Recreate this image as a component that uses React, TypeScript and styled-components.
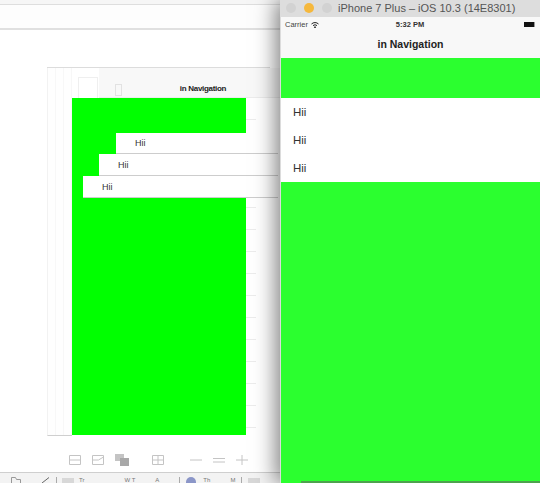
import React from "react";
import styled, { createGlobalStyle } from "styled-components";

const Global = createGlobalStyle`
  html, body { margin: 0; padding: 0; background: #fff; }
  #root { width: 540px; height: 483px; overflow: hidden; }
`;

const Page = styled.div`
  width: 540px;
  height: 483px;
  display: flex;
  overflow: hidden;
  font-family: "Liberation Sans", Arial, sans-serif;
  background: #fff;
`;

const Xcode = styled.div`
  width: 280px;
  flex: none;
  display: flex;
  flex-direction: column;
  position: relative;
`;

const TopStrip = styled.div`
  height: 4px;
  background: #f6f6f6;
  border-bottom: 1px solid #dedede;
`;

const TabBand = styled.div`
  height: 23px;
  background: #fdfdfd;
  border-bottom: 2px solid #e0e0e0;
`;

const Canvas = styled.div`
  flex: 1;
  position: relative;
  background: #fff;
`;

const Scene = styled.div`
  position: absolute;
  left: 47px;
  top: 37px;
  width: 233px;
  height: 371px;
`;

const SceneTopLine = styled.div`
  position: absolute;
  left: 0;
  right: 10px;
  top: 0;
  height: 1px;
  background: #dcdcdc;
`;

const Stripes = styled.div`
  position: absolute;
  left: 0;
  top: 1px;
  width: 25px;
  height: 368px;
  box-sizing: border-box;
  border-left: 1px solid #f2f2f2;
  border-bottom: 1px solid #cfcfcf;
  background: repeating-linear-gradient(90deg, #fefefe 0 7px, #f7f7f7 7px 8px);
`;

const SceneCorner = styled.div`
  position: absolute;
  left: 31px;
  top: 10px;
  width: 20px;
  height: 21px;
  box-sizing: border-box;
  border: 1px solid #efefef;
  border-bottom: none;
`;

const SceneBar = styled.div`
  position: absolute;
  left: 52px;
  right: 0;
  top: 1px;
  height: 30px;
  background: #f8f8f8;
  border-bottom: 1px solid #ececec;
  display: flex;
  align-items: center;
  justify-content: center;
  padding: 11px 0 0 27px;
  box-sizing: border-box;
  font-size: 8px;
  letter-spacing: -0.3px;
  font-weight: 700;
  color: #222;
`;

const SceneIcon = styled.div`
  position: absolute;
  left: 68px;
  top: 17px;
  width: 5px;
  height: 10px;
  border: 1px solid #e2e2e2;
`;

const SceneGreen = styled.div`
  position: absolute;
  left: 25px;
  top: 31px;
  width: 174px;
  height: 337px;
  background: #00ff00;
`;

const RightGutter = styled.div`
  position: absolute;
  left: 199px;
  width: 10px;
  top: 31px;
  height: 337px;
  background: repeating-linear-gradient(180deg, #ffffff 0 21px, #ececec 21px 22px);
`;

const ShiftedRow = styled.div<{ $left: number; $top: number; $h: number }>`
  position: absolute;
  left: ${(p) => p.$left}px;
  right: 2px;
  top: ${(p) => p.$top}px;
  height: ${(p) => p.$h}px;
  background: #fff;
  border-bottom: 1px solid #cdcdcd;
  box-sizing: border-box;
  padding-left: 19px;
  display: flex;
  align-items: center;
  font-size: 9px;
  color: #333;
`;

const BottomBar = styled.div`
  position: absolute;
  left: 0;
  right: 0;
  bottom: 0;
  height: 24px;
  display: flex;
  align-items: center;
  padding-left: 68px;
  box-sizing: border-box;
  color: #c4c4c4;
`;

const ToolGroup = styled.div<{ $gap: number; $ml?: number }>`
  display: flex;
  gap: ${(p) => p.$gap}px;
  margin-left: ${(p) => p.$ml ?? 0}px;
  align-items: center;
`;

const Status = styled.div`
  height: 10px;
  box-sizing: content-box;
  background: #f3f3f3;
  border-top: 1px solid #cfcfcf;
  display: flex;
  align-items: flex-end;
  overflow: hidden;
  font-size: 6px;
  line-height: 6px;
  color: #777;
  white-space: nowrap;
  padding-left: 11px;
`;

const StatusItem = styled.span<{ $ml: number }>`
  margin-left: ${(p) => p.$ml}px;
  flex: none;
`;

const StatusSvg = styled.svg<{ $ml: number }>`
  margin-left: ${(p) => p.$ml}px;
  flex: none;
  display: block;
`;

const StatusSep = styled.span<{ $ml: number }>`
  width: 1px;
  height: 6px;
  margin-left: ${(p) => p.$ml}px;
  background: #aaa;
  flex: none;
`;

const StatusBox = styled.span<{ $ml: number }>`
  width: 12px;
  height: 5px;
  margin-left: ${(p) => p.$ml}px;
  background: #d8d8d8;
  flex: none;
`;

const StatusDot = styled.span<{ $ml: number }>`
  width: 10px;
  height: 6px;
  margin-left: ${(p) => p.$ml}px;
  border-radius: 5px 5px 0 0;
  background: #8b96c8;
  flex: none;
`;

const Simulator = styled.div`
  flex: 1;
  display: flex;
  flex-direction: column;
  position: relative;
  background: #dcdcdc;
  box-shadow: -4px 0 20px rgba(0, 0, 0, 0.5);
`;

const TitleBar = styled.div`
  height: 17px;
  flex: none;
  display: flex;
  align-items: center;
  background: #dddddd;
  padding-left: 6px;
  padding-bottom: 1px;
  box-sizing: border-box;
`;

const Lights = styled.div`
  display: flex;
  gap: 8px;
`;

const Light = styled.span<{ $c: string }>`
  width: 10px;
  height: 10px;
  border-radius: 50%;
  background: ${(p) => p.$c};
  flex: none;
`;

const TitleText = styled.span`
  margin-left: 6px;
  font-size: 11px;
  color: #555;
  white-space: nowrap;
`;

const Screen = styled.div`
  flex: 1;
  margin-left: 1px;
  display: flex;
  flex-direction: column;
  background: #2bff2f;
`;

const StatusBar = styled.div`
  height: 15px;
  flex: none;
  background: #f8f8f8;
  display: grid;
  grid-template-columns: 1fr auto 1fr;
  align-items: center;
  padding: 0 5px 0 4px;
  font-size: 7.5px;
  color: #222;
`;

const Carrier = styled.div`
  display: flex;
  align-items: center;
  gap: 3px;
  color: #444;
`;

const Time = styled.div`
  font-weight: 700;
  font-size: 7.5px;
  color: #333;
`;

const Battery = styled.div`
  justify-self: end;
  width: 10px;
  height: 5px;
  background: #111;
  border-right: 1px solid #999;
`;

const NavBar = styled.div`
  height: 26px;
  flex: none;
  background: #f8f8f8;
  display: flex;
  align-items: center;
  justify-content: center;
  padding-bottom: 2px;
  box-sizing: border-box;
  font-size: 10.5px;
  font-weight: 700;
  color: #222;
`;

const Header = styled.div`
  height: 40px;
  flex: none;
`;

const Rows = styled.div`
  flex: none;
  background: #fff;
`;

const Row = styled.div`
  height: 28px;
  display: flex;
  align-items: center;
  padding-left: 12px;
  font-size: 11.5px;
  color: #333;
`;

const BottomEdge = styled.div`
  margin-top: auto;
  margin-left: 20px;
  height: 2px;
  background: #4ea24e;
`;

const Glyph = ({ d, w = 14 }: { d: string; w?: number }) => (
  <svg width={w} height="12" viewBox={`0 0 ${w} 12`} fill="none" stroke="currentColor" strokeWidth="1">
    <path d={d} />
  </svg>
);

export default function App() {
  return (
    <Page>
      <Global />
      <Xcode>
        <TopStrip />
        <TabBand />
        <Canvas>
          <Scene>
            <SceneTopLine />
            <Stripes />
            <SceneCorner />
            <RightGutter />
            <SceneBar>in Navigation</SceneBar>
            <SceneIcon />
            <SceneGreen />
            <ShiftedRow $left={69} $top={66} $h={21}>Hii</ShiftedRow>
            <ShiftedRow $left={52} $top={87} $h={22}>Hii</ShiftedRow>
            <ShiftedRow $left={36} $top={109} $h={22}>Hii</ShiftedRow>
          </Scene>
          <BottomBar>
            <ToolGroup $gap={9}>
              <Glyph d="M1.5 1.5h11v9h-11zM1.5 6h11" />
              <Glyph d="M1.5 1.5h11v9h-11zM1.5 6h6l5-3" />
              <svg width="16" height="14" viewBox="0 0 16 14">
                <rect x="1" y="1" width="9" height="7" fill="#c4c4c4" />
                <rect x="6" y="5" width="9" height="8" fill="#a8a8a8" />
              </svg>
            </ToolGroup>
            <ToolGroup $gap={0} $ml={21}>
              <Glyph d="M1.5 1.5h11v9h-11zM1.5 6h11M7 1.5v9" />
            </ToolGroup>
            <ToolGroup $gap={9} $ml={24}>
              <Glyph d="M1 6h12" />
              <Glyph d="M1 4.5h12M1 8h12" />
              <Glyph d="M1 6h12M7 1v10" />
            </ToolGroup>
          </BottomBar>
        </Canvas>
        <Status>
          <StatusSvg $ml={0} width="10" height="6" viewBox="0 0 10 6" fill="none" stroke="#999">
            <path d="M.5 6V.5h4l1 2h4V6" />
          </StatusSvg>
          <StatusSvg $ml={20} width="9" height="6" viewBox="0 0 9 6" fill="none" stroke="#666">
            <path d="M1 6 8 .5" />
          </StatusSvg>
          <StatusSep $ml={6} />
          <StatusBox $ml={5} />
          <StatusItem $ml={5}>Tr</StatusItem>
          <StatusItem $ml={40}>W T</StatusItem>
          <StatusItem $ml={20}>A</StatusItem>
          <StatusSep $ml={20} />
          <StatusDot $ml={6} />
          <StatusItem $ml={7}>Th</StatusItem>
          <StatusItem $ml={20}>M</StatusItem>
          <StatusSep $ml={6} />
          <StatusBox $ml={6} />
        </Status>
      </Xcode>
      <Simulator>
        <TitleBar>
          <Lights>
            <Light $c="#d2d2d2" />
            <Light $c="#f5b83d" />
            <Light $c="#d2d2d2" />
          </Lights>
          <TitleText>iPhone 7 Plus – iOS 10.3 (14E8301)</TitleText>
        </TitleBar>
        <Screen>
          <StatusBar>
            <Carrier>
              Carrier
              <svg width="8" height="6" viewBox="0 0 8 6" fill="none" stroke="#222" strokeWidth="1">
                <path d="M.5 2a5 5 0 0 1 7 0M2 3.6a3 3 0 0 1 4 0" />
                <circle cx="4" cy="5.2" r=".5" fill="#222" />
              </svg>
            </Carrier>
            <Time>5:32 PM</Time>
            <Battery />
          </StatusBar>
          <NavBar>in Navigation</NavBar>
          <Header />
          <Rows>
            <Row>Hii</Row>
            <Row>Hii</Row>
            <Row>Hii</Row>
          </Rows>
          <BottomEdge />
        </Screen>
      </Simulator>
    </Page>
  );
}
